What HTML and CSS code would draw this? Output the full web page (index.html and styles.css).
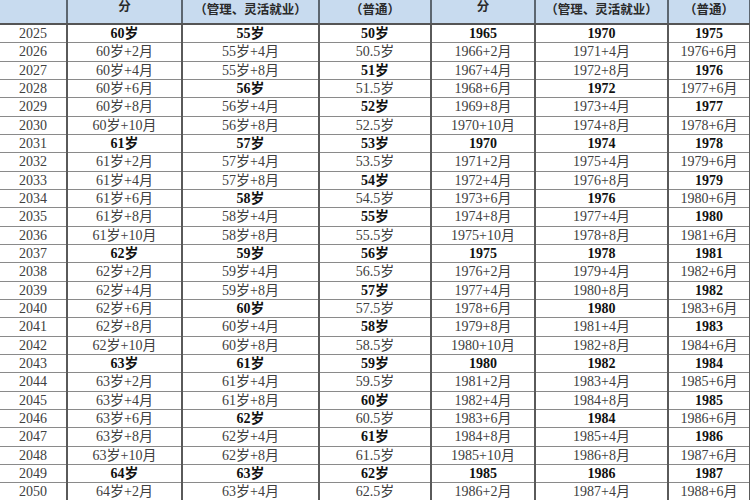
FILE: index.html
```html
<!DOCTYPE html>
<html lang="zh-CN">
<head>
<meta charset="utf-8">
<title>延迟退休年龄对照表</title>
<link rel="stylesheet" href="styles.css">
</head>
<body>
<table class="sheet">
<colgroup>
<col class="c1"><col class="c2"><col class="c3"><col class="c4"><col class="c5"><col class="c6"><col class="c7">
</colgroup>
<thead>
<tr>
<th></th>
<th class="tail">分</th>
<th>（管理、灵活就业）</th>
<th>（普通）</th>
<th class="tail">分</th>
<th>（管理、灵活就业）</th>
<th>（普通）</th>
</tr>
</thead>
<tbody>
<tr><td>2025</td><td class="b">60岁</td><td class="b">55岁</td><td class="b">50岁</td><td class="b">1965</td><td class="b">1970</td><td class="b">1975</td></tr>
<tr><td>2026</td><td>60岁+2月</td><td>55岁+4月</td><td>50.5岁</td><td>1966+2月</td><td>1971+4月</td><td>1976+6月</td></tr>
<tr><td>2027</td><td>60岁+4月</td><td>55岁+8月</td><td class="b">51岁</td><td>1967+4月</td><td>1972+8月</td><td class="b">1976</td></tr>
<tr><td>2028</td><td>60岁+6月</td><td class="b">56岁</td><td>51.5岁</td><td>1968+6月</td><td class="b">1972</td><td>1977+6月</td></tr>
<tr><td>2029</td><td>60岁+8月</td><td>56岁+4月</td><td class="b">52岁</td><td>1969+8月</td><td>1973+4月</td><td class="b">1977</td></tr>
<tr><td>2030</td><td>60岁+10月</td><td>56岁+8月</td><td>52.5岁</td><td>1970+10月</td><td>1974+8月</td><td>1978+6月</td></tr>
<tr><td>2031</td><td class="b">61岁</td><td class="b">57岁</td><td class="b">53岁</td><td class="b">1970</td><td class="b">1974</td><td class="b">1978</td></tr>
<tr><td>2032</td><td>61岁+2月</td><td>57岁+4月</td><td>53.5岁</td><td>1971+2月</td><td>1975+4月</td><td>1979+6月</td></tr>
<tr><td>2033</td><td>61岁+4月</td><td>57岁+8月</td><td class="b">54岁</td><td>1972+4月</td><td>1976+8月</td><td class="b">1979</td></tr>
<tr><td>2034</td><td>61岁+6月</td><td class="b">58岁</td><td>54.5岁</td><td>1973+6月</td><td class="b">1976</td><td>1980+6月</td></tr>
<tr><td>2035</td><td>61岁+8月</td><td>58岁+4月</td><td class="b">55岁</td><td>1974+8月</td><td>1977+4月</td><td class="b">1980</td></tr>
<tr><td>2036</td><td>61岁+10月</td><td>58岁+8月</td><td>55.5岁</td><td>1975+10月</td><td>1978+8月</td><td>1981+6月</td></tr>
<tr><td>2037</td><td class="b">62岁</td><td class="b">59岁</td><td class="b">56岁</td><td class="b">1975</td><td class="b">1978</td><td class="b">1981</td></tr>
<tr><td>2038</td><td>62岁+2月</td><td>59岁+4月</td><td>56.5岁</td><td>1976+2月</td><td>1979+4月</td><td>1982+6月</td></tr>
<tr><td>2039</td><td>62岁+4月</td><td>59岁+8月</td><td class="b">57岁</td><td>1977+4月</td><td>1980+8月</td><td class="b">1982</td></tr>
<tr><td>2040</td><td>62岁+6月</td><td class="b">60岁</td><td>57.5岁</td><td>1978+6月</td><td class="b">1980</td><td>1983+6月</td></tr>
<tr><td>2041</td><td>62岁+8月</td><td>60岁+4月</td><td class="b">58岁</td><td>1979+8月</td><td>1981+4月</td><td class="b">1983</td></tr>
<tr><td>2042</td><td>62岁+10月</td><td>60岁+8月</td><td>58.5岁</td><td>1980+10月</td><td>1982+8月</td><td>1984+6月</td></tr>
<tr><td>2043</td><td class="b">63岁</td><td class="b">61岁</td><td class="b">59岁</td><td class="b">1980</td><td class="b">1982</td><td class="b">1984</td></tr>
<tr><td>2044</td><td>63岁+2月</td><td>61岁+4月</td><td>59.5岁</td><td>1981+2月</td><td>1983+4月</td><td>1985+6月</td></tr>
<tr><td>2045</td><td>63岁+4月</td><td>61岁+8月</td><td class="b">60岁</td><td>1982+4月</td><td>1984+8月</td><td class="b">1985</td></tr>
<tr><td>2046</td><td>63岁+6月</td><td class="b">62岁</td><td>60.5岁</td><td>1983+6月</td><td class="b">1984</td><td>1986+6月</td></tr>
<tr><td>2047</td><td>63岁+8月</td><td>62岁+4月</td><td class="b">61岁</td><td>1984+8月</td><td>1985+4月</td><td class="b">1986</td></tr>
<tr><td>2048</td><td>63岁+10月</td><td>62岁+8月</td><td>61.5岁</td><td>1985+10月</td><td>1986+8月</td><td>1987+6月</td></tr>
<tr><td>2049</td><td class="b">64岁</td><td class="b">63岁</td><td class="b">62岁</td><td class="b">1985</td><td class="b">1986</td><td class="b">1987</td></tr>
<tr><td>2050</td><td>64岁+2月</td><td>63岁+4月</td><td>62.5岁</td><td>1986+2月</td><td>1987+4月</td><td>1988+6月</td></tr>
</tbody>
</table>
</body>
</html>
```
FILE: styles.css
```css
html, body {
  margin: 0;
  padding: 0;
  background: #ffffff;
  overflow: hidden;
}

.sheet {
  width: 750px;
  table-layout: fixed;
  border-collapse: collapse;
  font-family: "Liberation Serif", "Noto Sans CJK SC", serif;
  font-size: 14px;
  color: #404040;
}

.c1 { width: 67px; }
.c2 { width: 115px; }
.c3 { width: 137px; }
.c4 { width: 112px; }
.c5 { width: 104px; }
.c6 { width: 133px; }
.c7 { width: 82px; }

.sheet th {
  height: 20px;
  padding: 0 0 3px;
  background: #c8dbef;
  color: #2a2a2a;
  font-size: 12.5px;
  line-height: 14px;
  font-weight: bold;
  text-align: center;
  vertical-align: middle;
  white-space: nowrap;
  border-right: 2px solid #5c6670;
  border-bottom: 2px solid #555;
}

.sheet th.tail {
  vertical-align: top;
  line-height: 15px;
  padding: 0;
}

.sheet td {
  height: 17.33px;
  padding: 0;
  line-height: 17px;
  text-align: center;
  vertical-align: middle;
  white-space: nowrap;
  border-right: 2px solid #5a5a5a;
  border-bottom: 1px solid #8a8a8a;
}

.sheet td.b {
  font-weight: bold;
  color: #111111;
}
```
